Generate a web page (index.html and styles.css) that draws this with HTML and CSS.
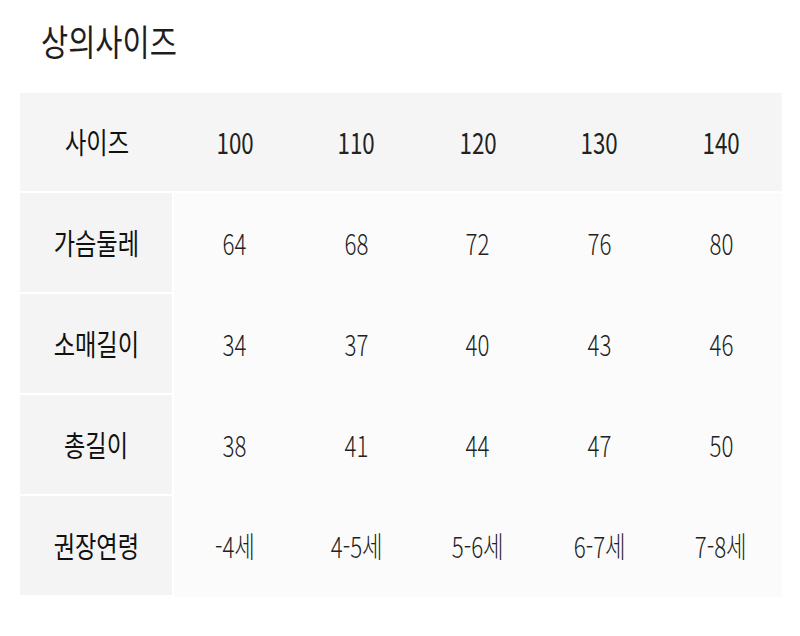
FILE: index.html
```html
<!DOCTYPE html>
<html lang="ko">
<head>
<meta charset="utf-8">
<link rel="stylesheet" href="styles.css">
</head>
<body>
<div class="page">
  <h1 class="title"><span class="sq">상의사이즈</span></h1>
  <div class="table">
    <div class="row head">
      <div class="cell label"><span class="sq">사이즈</span></div>
      <div class="cell"><span class="sq">100</span></div>
      <div class="cell"><span class="sq">110</span></div>
      <div class="cell"><span class="sq">120</span></div>
      <div class="cell"><span class="sq">130</span></div>
      <div class="cell"><span class="sq">140</span></div>
    </div>
    <div class="row">
      <div class="cell label"><span class="sq">가슴둘레</span></div>
      <div class="cell"><span class="sq">64</span></div>
      <div class="cell"><span class="sq">68</span></div>
      <div class="cell"><span class="sq">72</span></div>
      <div class="cell"><span class="sq">76</span></div>
      <div class="cell"><span class="sq">80</span></div>
    </div>
    <div class="row">
      <div class="cell label"><span class="sq">소매길이</span></div>
      <div class="cell"><span class="sq">34</span></div>
      <div class="cell"><span class="sq">37</span></div>
      <div class="cell"><span class="sq">40</span></div>
      <div class="cell"><span class="sq">43</span></div>
      <div class="cell"><span class="sq">46</span></div>
    </div>
    <div class="row">
      <div class="cell label"><span class="sq">총길이</span></div>
      <div class="cell"><span class="sq">38</span></div>
      <div class="cell"><span class="sq">41</span></div>
      <div class="cell"><span class="sq">44</span></div>
      <div class="cell"><span class="sq">47</span></div>
      <div class="cell"><span class="sq">50</span></div>
    </div>
    <div class="row">
      <div class="cell label"><span class="sq">권장연령</span></div>
      <div class="cell"><span class="sq">-4세</span></div>
      <div class="cell"><span class="sq">4-5세</span></div>
      <div class="cell"><span class="sq">5-6세</span></div>
      <div class="cell"><span class="sq">6-7세</span></div>
      <div class="cell"><span class="sq">7-8세</span></div>
    </div>
  </div>
</div>
</body>
</html>
```

FILE: styles.css
```css
html, body {
  margin: 0;
  padding: 0;
  background: #fff;
}
body {
  font-family: "Noto Sans CJK KR", "Noto Sans", sans-serif;
  color: #222;
}
.page {
  width: 800px;
  height: 636px;
  overflow: hidden;
}
.title {
  margin: 0;
  padding: 20px 0 0 41px;
  height: 93px;
  box-sizing: border-box;
  font-size: 36px;
  line-height: 40px;
  font-weight: 400;
  color: #1e1e1e;
}
.title .sq {
  transform-origin: left center;
  transform: scaleX(0.82);
}
.sq {
  display: inline-block;
  white-space: nowrap;
  transform: scaleX(0.77);
}
.table {
  margin-left: 20px;
  width: 762px;
}
.row {
  display: grid;
  grid-template-columns: 154px repeat(5, 1fr);
  height: 101px;
  background: #fbfbfb;
}
.row.head {
  height: 100px;
  background: #f5f5f5;
}
.cell {
  display: flex;
  align-items: center;
  justify-content: center;
  font-size: 29px;
  font-weight: 300;
  color: #222;
  box-sizing: border-box;
  padding-bottom: 4px;
}
.head .cell {
  font-weight: 400;
  background: #f5f5f5;
  border-bottom: 2px solid #fff;
  padding-bottom: 2px;
  color: #222;
}
.label {
  background: #f4f4f4;
  border-right: 2px solid #fff;
  border-bottom: 2px solid #fff;
  padding-bottom: 2px;
}
.cell.label {
  font-weight: 400;
  color: #111;
}
.label .sq {
  transform: scaleX(0.8);
}
.head .label {
  border-right: 0;
}
```
